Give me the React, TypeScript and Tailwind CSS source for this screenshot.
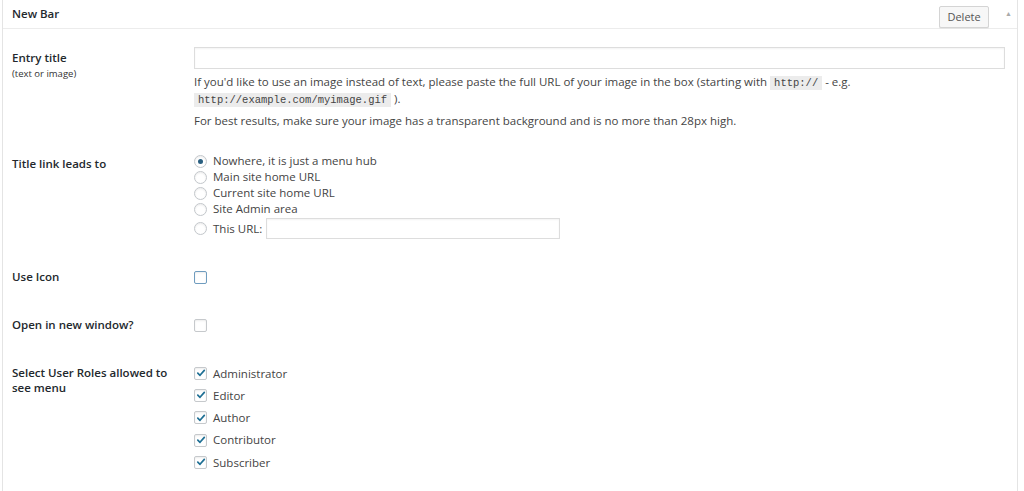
import React from 'react';

const font = { fontFamily: '"Open Sans", "Noto Sans", sans-serif' };

function Radio({ checked }: { checked?: boolean }) {
  return (
    <span className="flex h-[13px] w-[13px] shrink-0 items-center justify-center rounded-full border border-[#c3c7cb] bg-white shadow-[inset_0_1px_2px_rgba(0,0,0,0.08)]">
      {checked && <span className="h-[5px] w-[5px] rounded-full bg-[#2a5f80]" />}
    </span>
  );
}

function Check({ checked, focus }: { checked?: boolean; focus?: boolean }) {
  return (
    <span
      className={`flex h-[13px] w-[13px] shrink-0 items-center justify-center rounded-[2px] border bg-white shadow-[inset_0_1px_2px_rgba(0,0,0,0.08)] ${
        focus ? 'border-[#6f9cbf]' : 'border-[#c6c9cc]'
      }`}
    >
      {checked && (
        <svg width="10" height="10" viewBox="0 0 10 10">
          <path d="M1.8 5.2 L4 7.3 L8.3 2.4" fill="none" stroke="#1e6f94" strokeWidth="1.7" strokeLinecap="round" strokeLinejoin="round" />
        </svg>
      )}
    </span>
  );
}

function Code({ children }: { children: React.ReactNode }) {
  return (
    <code className="bg-[#ececec] px-[4px] py-[1px] text-[10.5px] leading-none text-[#444]" style={{ fontFamily: '"Liberation Mono", monospace' }}>
      {children}
    </code>
  );
}

export default function App() {
  const roles = ['Administrator', 'Editor', 'Author', 'Contributor', 'Subscriber'];
  const links = ['Nowhere, it is just a menu hub', 'Main site home URL', 'Current site home URL', 'Site Admin area'];

  return (
    <div className="h-[491px] w-[1024px] overflow-hidden bg-white pl-[2px] pr-[6px] text-[11.5px] text-[#444]" style={font}>
      <div className="h-full border-x border-[#e4e4e4]">
        {/* header */}
        <div className="flex h-[29px] items-start border-b border-[#ececec] pl-[9px] pr-[5px]">
          <span className="mt-[5px] text-[11.5px] font-semibold text-[#23282d]">New Bar</span>
          <div className="ml-auto flex items-start gap-[16px]">
            <button className="mt-[6px] h-[22px] w-[50px] rounded-[2px] border border-[#d4d4d4] bg-[#f7f7f7] text-[11px] text-[#555] shadow-[0_1px_0_#e5e5e5]">
              Delete
            </button>
            <span className="mt-[9px] text-[7px] text-[#aaa]">▲</span>
          </div>
        </div>

        {/* entry title */}
        <div className="mt-[18px] flex">
          <div className="w-[191px] shrink-0 pl-[9px]">
            <div className="pt-[1px] font-semibold leading-[20px] text-[#23282d]">Entry title</div>
            <div className="text-[9.5px] leading-[11px] text-[#333]">(text or image)</div>
          </div>
          <div className="w-[811px]">
            <div className="h-[22px] border border-[#ddd] bg-white shadow-[inset_0_1px_2px_rgba(0,0,0,0.05)]" />
            <p className="mt-[4px] leading-[17px]">
              If you'd like to use an image instead of text, please paste the full URL of your image in the box (starting with <Code>http://</Code> - e.g.
              <br />
              <Code>http://example.com/myimage.gif</Code> ).
            </p>
            <p className="mt-[5px] leading-[17px]">For best results, make sure your image has a transparent background and is no more than 28px high.</p>
          </div>
        </div>

        {/* title link */}
        <div className="mt-[24px] flex">
          <div className="w-[191px] shrink-0 pl-[9px] pt-[3px] font-semibold leading-[16px] text-[#23282d]">Title link leads to</div>
          <div>
            {links.map((l, i) => (
              <label key={l} className="flex h-[16px] items-center gap-[6px]">
                <Radio checked={i === 0} />
                <span>{l}</span>
              </label>
            ))}
            <label className="mt-[1px] flex h-[21px] items-center gap-[6px]">
              <Radio />
              <span>This URL:</span>
              <span className="ml-[-2px] h-[21px] w-[294px] border border-[#ddd] bg-white shadow-[inset_0_1px_2px_rgba(0,0,0,0.05)]" />
            </label>
          </div>
        </div>

        {/* use icon */}
        <div className="mt-[28px] flex h-[20px] items-center">
          <div className="w-[191px] shrink-0 pl-[9px] font-semibold text-[#23282d]">Use Icon</div>
          <Check focus />
        </div>

        {/* new window */}
        <div className="mt-[28px] flex h-[20px] items-center">
          <div className="w-[191px] shrink-0 pl-[9px] font-semibold text-[#23282d]">Open in new window?</div>
          <Check />
        </div>

        {/* roles */}
        <div className="mt-[27px] flex">
          <div className="w-[191px] shrink-0 pl-[9px] pt-[3px] font-semibold leading-[15px] text-[#23282d]">
            Select User Roles allowed to
            <br />
            see menu
          </div>
          <div>
            {roles.map((r) => (
              <label key={r} className="flex h-[22.3px] items-center gap-[6px]">
                <Check checked />
                <span>{r}</span>
              </label>
            ))}
          </div>
        </div>
      </div>
    </div>
  );
}
